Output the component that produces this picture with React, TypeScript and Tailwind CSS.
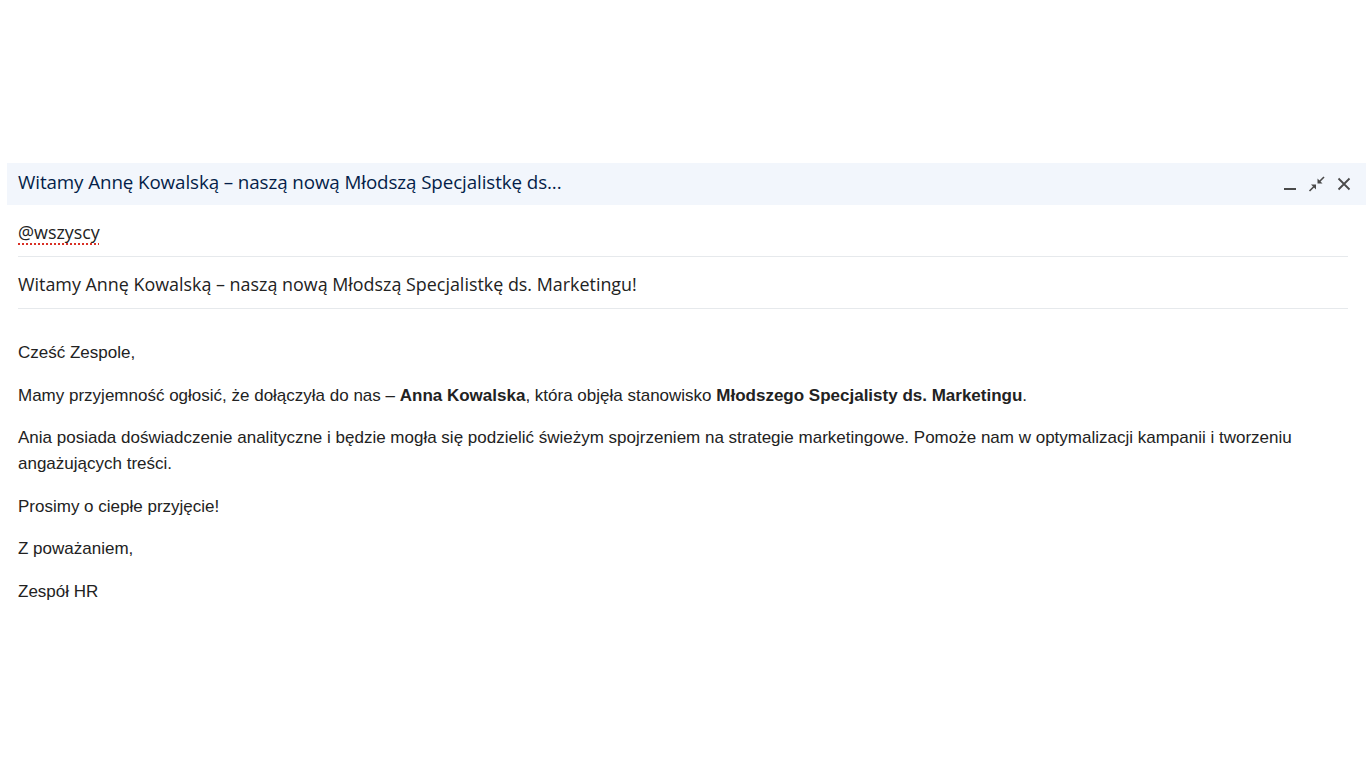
import React from "react";

export default function App() {
  return (
    <div className="w-[1366px] h-[768px] bg-white overflow-hidden pt-[163px]">
      <div className="ml-[7px]">
        <div className="h-[42px] bg-[#f2f6fc] flex items-center pl-[11px] pr-[14px]">
          <div className="flex-1 text-[18.8px] text-[#041e49] font-medium font-['Open_Sans',sans-serif] tracking-[-0.1px] -mt-[4px]">
            Witamy Annę Kowalską – naszą nową Młodszą Specjalistkę ds...
          </div>
          <div className="flex items-center gap-[10px] text-[#4a4a4a]">
            <svg width="16" height="16" viewBox="0 0 16 16" className="mt-[2px]">
              <rect x="2" y="11" width="12" height="2" fill="currentColor" />
            </svg>
            <svg width="18" height="16" viewBox="0 0 18 16">
              <path d="M9.5 7.5 L9.5 2.5 L14.5 7.5 Z" fill="currentColor" />
              <path d="M11.5 5.5 L16 1" stroke="currentColor" strokeWidth="1.6" />
              <path d="M8 8.5 L8 13.5 L3 8.5 Z" fill="currentColor" />
              <path d="M6 10.5 L1.5 15" stroke="currentColor" strokeWidth="1.6" />
            </svg>
            <svg width="16" height="16" viewBox="0 0 16 16">
              <path d="M2.5 2.5 L13.5 13.5 M13.5 2.5 L2.5 13.5" stroke="currentColor" strokeWidth="1.8" fill="none" />
            </svg>
          </div>
        </div>
        <div className="pl-[11px] pr-[18px] font-['Open_Sans',sans-serif] text-[#222] text-[17.9px]">
          <div className="h-[52px] flex items-center border-b border-[#e6e9ec] pt-[4px]">
            <span className="underline decoration-dotted decoration-[#d93025] underline-offset-[5px]">@wszyscy</span>
          </div>
          <div className="h-[52px] flex items-center border-b border-[#e6e9ec] pt-[3px]">
            Witamy Annę Kowalską – naszą nową Młodszą Specjalistkę ds. Marketingu!
          </div>
        </div>
        <div className="pl-[11px] pr-[40px] pt-[31px] font-['Liberation_Sans',Arial,sans-serif] text-[17px] leading-[26px] text-[#222] flex flex-col gap-[16.6px]">
          <p>Cześć Zespole,</p>
          <p>
            Mamy przyjemność ogłosić, że dołączyła do nas – <b>Anna Kowalska</b>, która objęła stanowisko <b>Młodszego Specjalisty ds. Marketingu</b>.
          </p>
          <p>
            Ania posiada doświadczenie analityczne i będzie mogła się podzielić świeżym spojrzeniem na strategie marketingowe. Pomoże nam w optymalizacji kampanii i tworzeniu angażujących treści.
          </p>
          <p>Prosimy o ciepłe przyjęcie!</p>
          <p>Z poważaniem,</p>
          <p>Zespół HR</p>
        </div>
      </div>
    </div>
  );
}
